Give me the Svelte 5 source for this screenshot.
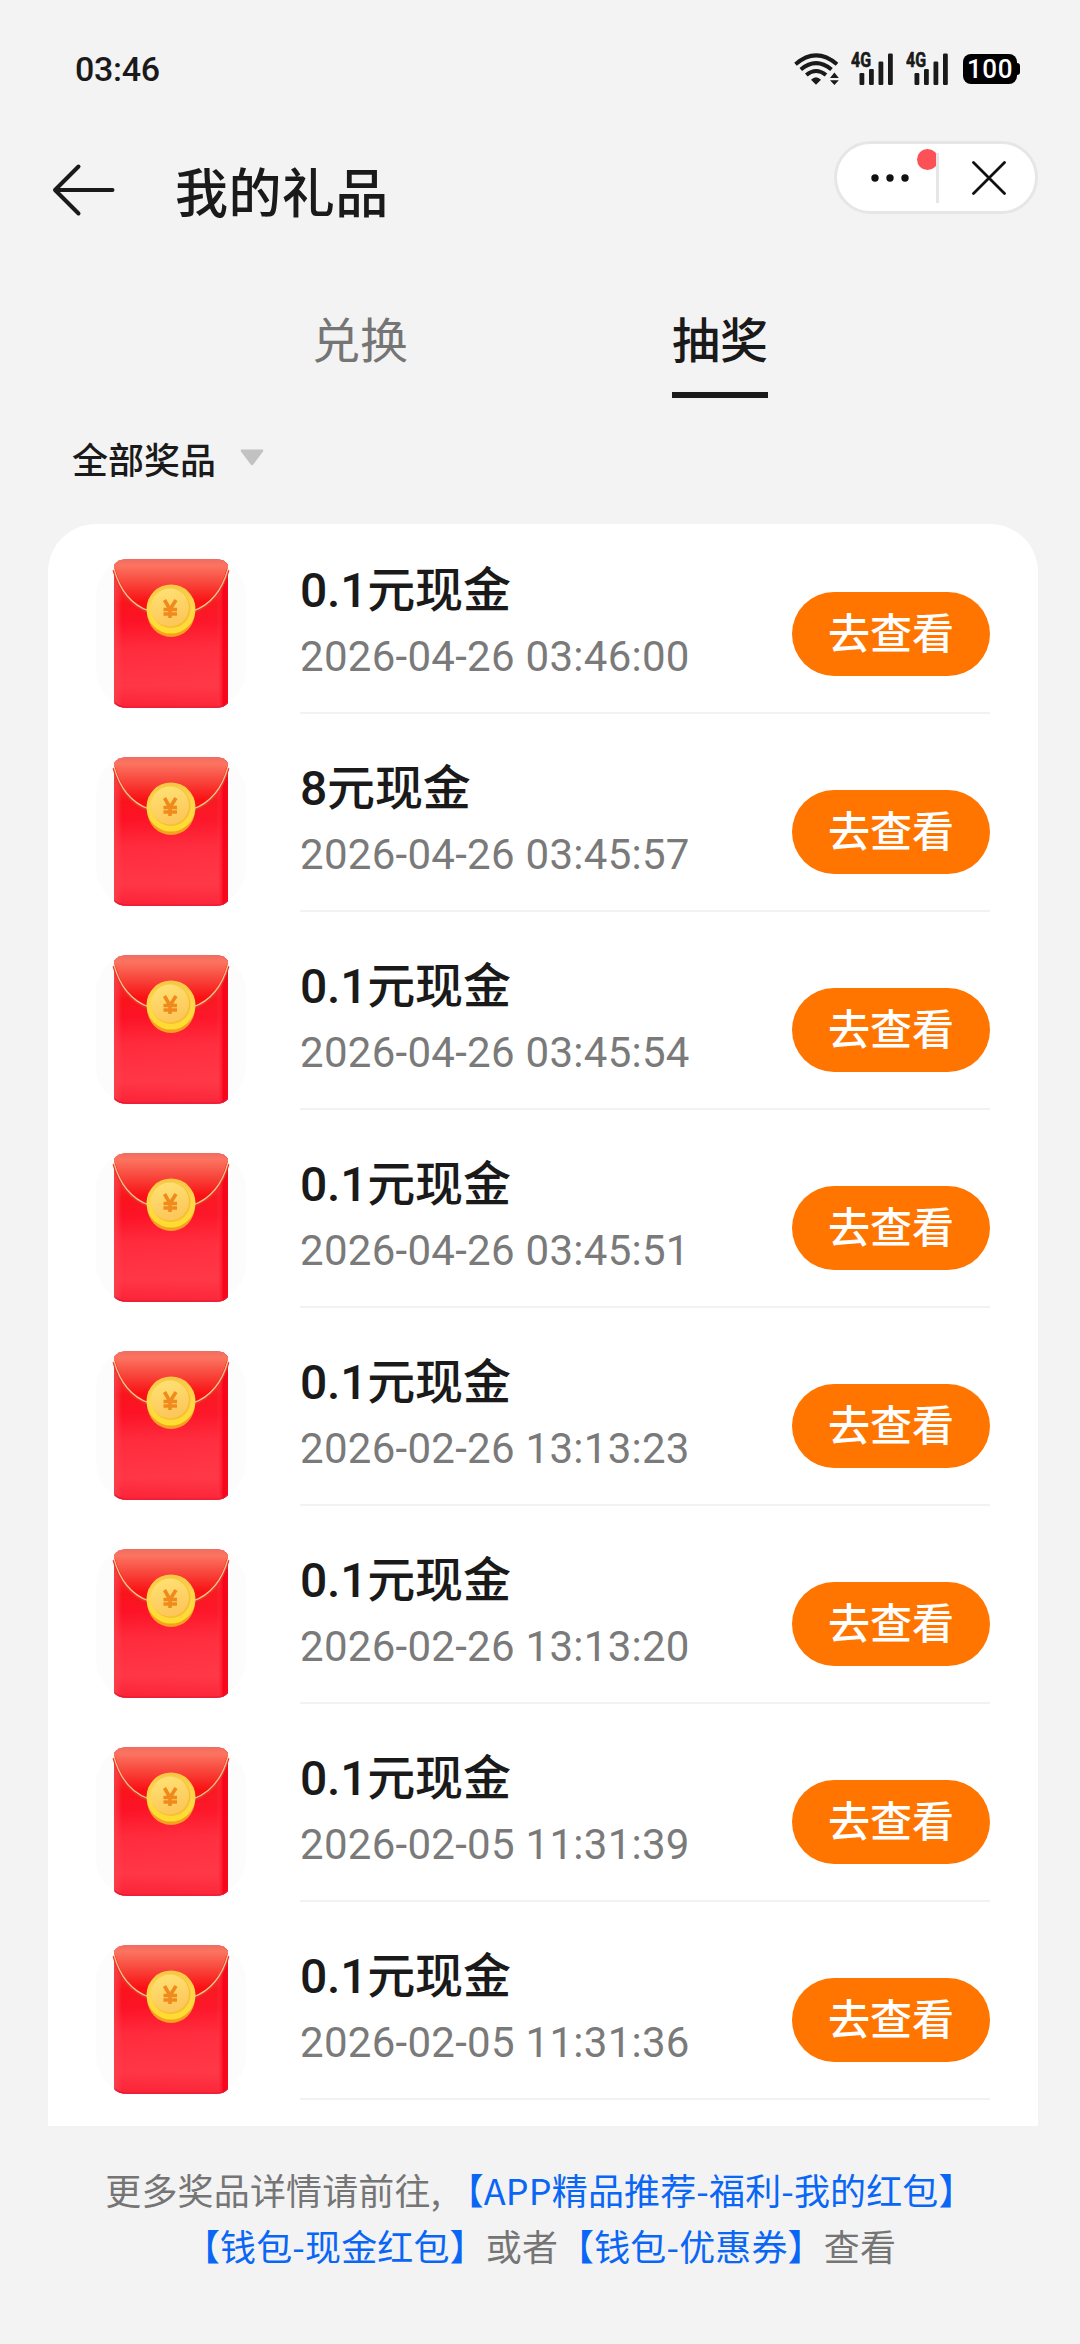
<script lang="ts">
  type Prize = { name: string; time: string };

  const tabs = ['兑换', '抽奖'];
  let activeTab = $state('抽奖');

  const prizes: Prize[] = [
    { name: '0.1元现金', time: '2026-04-26 03:46:00' },
    { name: '8元现金', time: '2026-04-26 03:45:57' },
    { name: '0.1元现金', time: '2026-04-26 03:45:54' },
    { name: '0.1元现金', time: '2026-04-26 03:45:51' },
    { name: '0.1元现金', time: '2026-02-26 13:13:23' },
    { name: '0.1元现金', time: '2026-02-26 13:13:20' },
    { name: '0.1元现金', time: '2026-02-05 11:31:39' },
    { name: '0.1元现金', time: '2026-02-05 11:31:36' }
  ];
</script>

{#snippet signal()}
  <svg class="signal" width="43" height="40" viewBox="0 -8 43 40">
    <text x="0" y="13.500" font-size="19.500" font-weight="700" textLength="20" lengthAdjust="spacingAndGlyphs" stroke="#1a1a1a" stroke-width="0.600">4G</text>
    <rect x="8.5" y="20" width="4.8" height="12" rx="1.2" />
    <rect x="18" y="16" width="4.8" height="16" rx="1.2" />
    <rect x="27.5" y="8.500" width="4.8" height="23.500" rx="1.2" />
    <rect x="37" y="0.500" width="4.800" height="31.500" rx="1.2" />
  </svg>
{/snippet}

{#snippet envelope()}
  <svg class="envelope" width="150" height="150" viewBox="0 0 150 150">
    <rect width="150" height="150" rx="38" fill="#fdfcfc" />
    <path d="M18 7Q22 1 31 1H120Q128 1 132 7V145Q128 150 120 150H31Q22 150 18 145Z" fill="url(#paper)" />
    <path d="M18 7Q22 1 31 1H120Q128 1 132 7V145Q128 150 120 150H31Q22 150 18 145Z" fill="url(#edge)" />
    <path d="M18 11C26 41 42 55 74 55S124 41 132 11V7Q128 1 120 1H31Q22 1 18 7Z" fill="url(#flap)" />
    <path d="M18 12C24 34 36 48 53 54M97 54C114 48 126 34 132 12" fill="none" stroke="#e8332b" stroke-width="3" />
    <path d="M18 11C24 33 36 47 53 53M97 53C114 47 126 33 132 11" fill="none" stroke="#ffc38a" stroke-width="1.200" />
    <path d="M19 145Q23 149 31 149H120Q128 149 131 145" fill="none" stroke="#e51a38" stroke-width="1.200" />
    <ellipse cx="75" cy="54" rx="24" ry="25" fill="#f5a31f" />
    <circle cx="75" cy="51" r="24.500" fill="url(#rim)" />
    <circle cx="75" cy="50.500" r="19.500" fill="#f5bf30" />
    <circle cx="74" cy="49.500" r="19" fill="url(#coin)" />
    <path d="M68.500 42L74 51.500L80 42M67.500 51.500H81M67.500 56H81M74 51V60" fill="none" stroke="#f08a1c" stroke-width="3.600" />
  </svg>
{/snippet}

<svg class="defs" width="0" height="0" aria-hidden="true">
  <defs>
    <linearGradient id="paper" x1="0" y1="0" x2="0" y2="1">
      <stop offset="0" stop-color="#f5544b" />
      <stop offset="0.3" stop-color="#f9141c" />
      <stop offset="0.42" stop-color="#fd1226" />
      <stop offset="0.6" stop-color="#ff2b3d" />
      <stop offset="0.85" stop-color="#ff3646" />
      <stop offset="1" stop-color="#fb2236" />
    </linearGradient>
    <linearGradient id="edge" x1="0" y1="0" x2="1" y2="0">
      <stop offset="0" stop-color="#f4434c" stop-opacity="0.8" />
      <stop offset="0.07" stop-color="#ff4a55" stop-opacity="0" />
      <stop offset="0.9" stop-color="#ff4a55" stop-opacity="0.1" />
      <stop offset="0.96" stop-color="#fa0018" stop-opacity="0.9" />
      <stop offset="1" stop-color="#f50a20" />
    </linearGradient>
    <linearGradient id="flap" x1="0" y1="0" x2="0" y2="1">
      <stop offset="0" stop-color="#ee6d62" />
      <stop offset="0.12" stop-color="#fc7460" />
      <stop offset="0.4" stop-color="#f84c40" />
      <stop offset="0.8" stop-color="#fa1014" />
      <stop offset="1" stop-color="#fb0e18" />
    </linearGradient>
    <linearGradient id="rim" x1="0" y1="0" x2="0" y2="1">
      <stop offset="0" stop-color="#f6c644" />
      <stop offset="0.5" stop-color="#ffd84c" />
      <stop offset="1" stop-color="#ffdc2e" />
    </linearGradient>
    <linearGradient id="coin" x1="0" y1="0" x2="0.300" y2="1">
      <stop offset="0" stop-color="#ffe375" />
      <stop offset="1" stop-color="#fdc75a" />
    </linearGradient>
  </defs>
</svg>

<div class="page">
  <div class="status-bar">
    <span class="clock">03:46</span>
    <div class="status-icons">
      <svg class="wifi" width="46" height="32" viewBox="0 0 46 32">
        <g fill="none" stroke="#1a1a1a" stroke-width="4">
          <path d="M1.500 11.200Q22 -6.500 43 11.200" />
          <path d="M6.800 16.500Q22 3.800 37.500 16.500" />
          <path d="M12.300 22Q22 14 32 22" />
        </g>
        <path d="M17 26.800Q22 21.800 27 26.800L22 31.800Z" />
        <path d="M36 25L40.400 19.500L44.800 25ZM36 27.300H44.800L40.400 32Z" />
      </svg>
      {@render signal()}
      {@render signal()}
      <div class="battery">100</div>
    </div>
  </div>

  <header class="header">
    <button class="back" aria-label="返回">
      <svg width="66" height="56" viewBox="0 0 66 56" fill="none" stroke="#1a1a1a" stroke-width="4" stroke-linecap="round" stroke-linejoin="round">
        <path d="M27.500 4.500L4 28L27.500 51.500M4 28H61.500" />
      </svg>
    </button>
    <h1>我的礼品</h1>
    <div class="capsule">
      <button class="more" aria-label="更多">
        <svg width="40" height="10" viewBox="0 0 40 10" fill="#111">
          <circle cx="5" cy="5" r="3.700" />
          <circle cx="20" cy="5" r="3.700" />
          <circle cx="35" cy="5" r="3.700" />
        </svg>
        <span class="dot"></span>
      </button>
      <span class="split"></span>
      <button class="close" aria-label="关闭">
        <svg width="34" height="34" viewBox="0 0 34 34" stroke="#111" stroke-width="2.800" stroke-linecap="round">
          <path d="M1.500 1.500L32.500 32.500M32.500 1.500L1.500 32.500" />
        </svg>
      </button>
    </div>
  </header>

  <nav class="tabs">
    {#each tabs as tab}
      <button class="tab" class:active={tab === activeTab} onclick={() => (activeTab = tab)}>{tab}</button>
    {/each}
  </nav>

  <button class="filter">
    <span>全部奖品</span>
    <svg width="24" height="17" viewBox="0 0 24 17">
      <path d="M1.500 0.500H22.500Q24 1 23 2.500L13.300 15.500Q12 17 10.700 15.500L1 2.500Q0 1 1.500 0.500Z" fill="#c2c2c2" />
    </svg>
  </button>

  <main class="card">
    {#each prizes as prize}
      <div class="row">
        {@render envelope()}
        <div class="body">
          <div class="info">
            <div class="name">{prize.name}</div>
            <div class="time">{prize.time}</div>
          </div>
          <button class="view">去查看</button>
        </div>
      </div>
    {/each}
  </main>

  <footer class="footer">
    <p>更多奖品详情请前往<span class="comma">,</span><a href="#packet">【APP精品推荐-福利-我的红包】</a></p>
    <p><a href="#cash">【钱包-现金红包】</a>或者<a href="#coupon">【钱包-优惠券】</a>查看</p>
  </footer>
</div>

<style>
  :global(body) {
    background: #f3f3f3;
  }

  .page {
    box-sizing: border-box;
    display: flex;
    flex-direction: column;
    width: 1080px;
    height: 2344px;
    overflow: hidden;
    background: #f3f3f3;
    color: #1a1a1a;
    font-family: Roboto, 'Noto Sans CJK SC', sans-serif;
  }

  button {
    padding: 0;
    border: none;
    background: none;
    color: inherit;
    font-family: inherit;
  }

  svg {
    display: block;
    flex-shrink: 0;
  }

  .defs {
    position: absolute;
  }

  /* Status bar */
  .status-bar {
    display: flex;
    justify-content: space-between;
    align-items: center;
    height: 138px;
    padding: 0 60px 0 75px;
  }

  .clock {
    font-size: 34px;
    font-weight: 500;
    letter-spacing: -0.3px;
  }

  .status-icons {
    display: flex;
    align-items: center;
    fill: #1a1a1a;
  }

  .wifi {
    margin-right: 11px;
  }

  .signal {
    margin: -8px 12px 0 0;
  }

  .battery {
    position: relative;
    width: 54px;
    height: 30px;
    margin: 0 3px 0 2px;
    border-radius: 8px;
    background: #000;
    color: #fff;
    font-size: 26px;
    font-weight: 500;
    letter-spacing: 0.5px;
    line-height: 31px;
    text-align: center;
  }

  .battery::after {
    content: '';
    position: absolute;
    top: 9px;
    right: -3px;
    width: 4px;
    height: 12px;
    border-radius: 0 3px 3px 0;
    background: #000;
  }

  /* Header */
  .header {
    display: flex;
    align-items: center;
    height: 112px;
    padding: 0 42px 0 51px;
  }

  .back {
    margin-top: -8px;
  }

  h1 {
    margin: 1px 0 0 58px;
    font-size: 53px;
    font-weight: 500;
    letter-spacing: 0.4px;
    line-height: 72px;
  }

  .capsule {
    box-sizing: border-box;
    display: flex;
    align-items: center;
    width: 204px;
    height: 73px;
    margin: -33px 0 0 auto;
    border: 3px solid #e6e6e6;
    border-radius: 37px;
    background: #fff;
  }

  .more {
    position: relative;
    display: flex;
    justify-content: flex-end;
    align-items: center;
    width: 99px;
    height: 67px;
    padding-right: 26px;
    box-sizing: border-box;
    overflow: hidden;
  }

  .dot {
    position: absolute;
    top: 5px;
    right: -2px;
    width: 21px;
    height: 21px;
    border-radius: 50%;
    background: #fb5157;
  }

  .split {
    width: 2.5px;
    height: 50px;
    background: #e6e6e6;
  }

  .close {
    display: flex;
    flex: 1;
    justify-content: center;
    padding-left: 4px;
  }

  /* Tabs */
  .tabs {
    display: flex;
    justify-content: center;
    gap: 264px;
    height: 148px;
    align-items: flex-end;
  }

  .tab {
    height: 96px;
    padding-bottom: 10px;
    border-bottom: 6px solid transparent;
    color: #757575;
    font-size: 48px;
    line-height: 68px;
  }

  .tab.active {
    border-color: #1a1a1a;
    color: #1a1a1a;
    font-weight: 500;
  }

  .filter {
    display: flex;
    align-items: center;
    gap: 24px;
    height: 126px;
    padding: 0 72px 7px;
    font-size: 36px;
    font-weight: 500;
  }

  /* Prize list */
  .card {
    height: 1602px;
    margin: 0 42px 0 48px;
    overflow: hidden;
    border-radius: 48px 48px 0 0;
    background: #fff;
  }

  .row {
    display: flex;
    height: 198px;
    padding: 0 48px;
  }

  .envelope {
    margin: 34px 54px 0 0;
  }

  .body {
    box-sizing: border-box;
    display: flex;
    flex: 1;
    justify-content: space-between;
    height: 190px;
    border-bottom: 2px solid #f2f2f2;
  }

  .info {
    padding-top: 35px;
  }

  .name {
    font-size: 48px;
    font-weight: 500;
    letter-spacing: -0.2px;
    line-height: 64px;
  }

  .time {
    margin-top: 6px;
    color: #7a7a7a;
    font-size: 42px;
    letter-spacing: 0.28px;
    line-height: 56px;
  }

  .view {
    width: 198px;
    height: 84px;
    margin-top: 68px;
    border-radius: 42px;
    background: #ff7500;
    color: #fff;
    font-size: 42px;
    font-weight: 500;
    line-height: 85px;
  }

  .footer {
    padding-top: 35px;
    color: #757575;
    font-family: 'Noto Sans CJK SC', sans-serif;
    font-size: 36px;
    letter-spacing: 0.15px;
    line-height: 56px;
    text-align: center;
  }

  .footer p {
    margin: 0;
    white-space: nowrap;
  }

  .comma {
    display: inline-block;
    width: 17px;
    text-align: left;
  }

  .footer a {
    color: #0a66f5;
    text-decoration: none;
  }
</style>
